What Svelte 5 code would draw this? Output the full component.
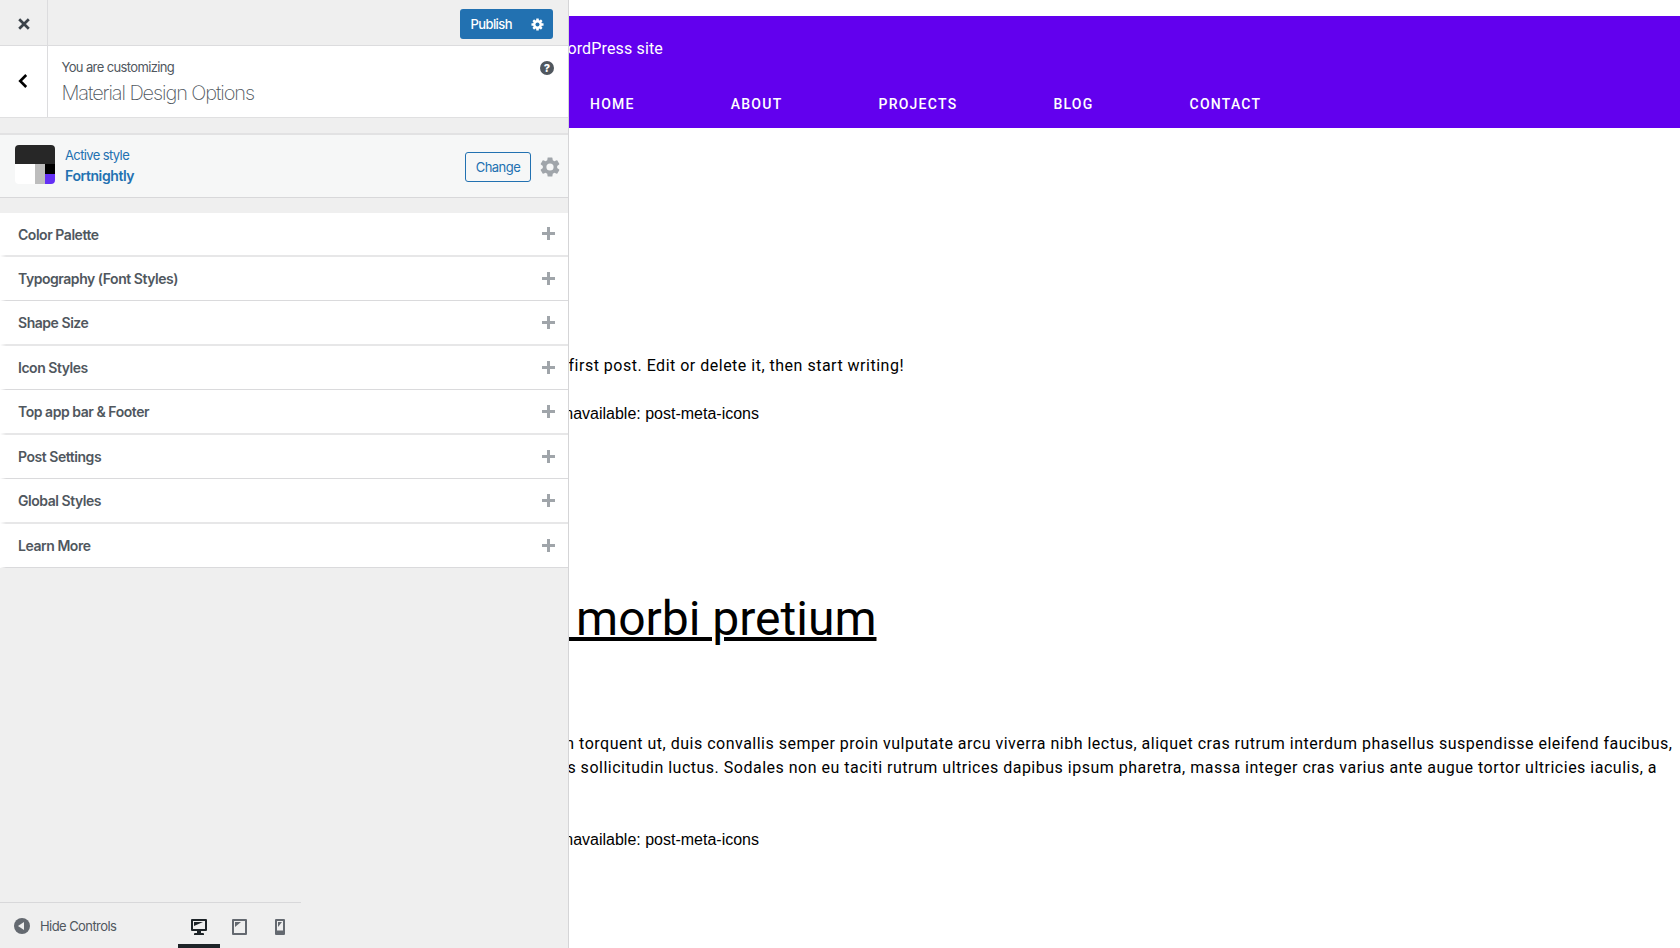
<script>
  const sections = [
    'Color Palette',
    'Typography (Font Styles)',
    'Shape Size',
    'Icon Styles',
    'Top app bar & Footer',
    'Post Settings',
    'Global Styles',
    'Learn More'
  ];
  const links = ['HOME', 'ABOUT', 'PROJECTS', 'BLOG', 'CONTACT'];
</script>

<div class="app">
  <aside>
    <div class="topbar">
      <div class="close">
        <svg width="12" height="12" viewBox="0 0 12 12"><path d="M1.2 1.2 10.8 10.8M10.8 1.2 1.2 10.8" stroke="#3c434a" stroke-width="2.7" /></svg>
      </div>
      <div class="publish">
        <span>Publish</span>
        <svg width="13" height="13" viewBox="-10 -10 20 20">
          <g fill="#fff">
            {#each [0, 45, 90, 135] as a}
              <rect x="-2" y="-9.3" width="4" height="18.6" rx=".5" transform="rotate({a})" />
            {/each}
            <circle r="6.8" />
          </g>
          <circle r="3.1" fill="#2271b1" />
        </svg>
      </div>
    </div>

    <header>
      <div class="back">
        <svg width="10" height="14" viewBox="0 0 10 14"><path d="M8.2 1 2.2 7l6 6" fill="none" stroke="#000" stroke-width="2.6" /></svg>
      </div>
      <div class="title">
        <p>You are customizing</p>
        <h1>Material Design Options</h1>
      </div>
      <div class="help">?</div>
    </header>

    <div class="gap"></div>

    <div class="style">
      <div class="swatch"><i class="dark"></i><i class="white"></i><i class="grey"></i><span><i class="black"></i><i class="violet"></i></span></div>
      <div class="name"><p>Active style</p><strong>Fortnightly</strong></div>
      <button>Change</button>
      <svg class="cog" width="24" height="24" viewBox="0 0 24 24"><path fill="#a0a5aa" d="M19.14 12.94c.04-.3.06-.61.06-.94 0-.32-.02-.64-.07-.94l2.03-1.58a.49.49 0 0 0 .12-.61l-1.92-3.32a.488.488 0 0 0-.59-.22l-2.39.96c-.5-.38-1.03-.7-1.62-.94l-.36-2.54a.484.484 0 0 0-.48-.41h-3.84c-.24 0-.43.17-.47.41l-.36 2.54c-.59.24-1.13.57-1.62.94l-2.39-.96c-.22-.08-.47 0-.59.22L2.74 8.87c-.12.21-.08.47.12.61l2.03 1.58c-.05.3-.09.63-.09.94s.02.64.07.94l-2.03 1.58a.49.49 0 0 0-.12.61l1.92 3.32c.12.22.37.29.59.22l2.39-.96c.5.38 1.03.7 1.62.94l.36 2.54c.05.24.24.41.48.41h3.84c.24 0 .44-.17.47-.41l.36-2.54c.59-.24 1.13-.56 1.62-.94l2.39.96c.22.08.47 0 .59-.22l1.92-3.32c.12-.22.07-.47-.12-.61l-2.01-1.58zM12 15.6A3.6 3.6 0 1 1 12 8.4a3.6 3.6 0 0 1 0 7.2z" /></svg>
    </div>

    <div class="gap second"></div>

    <ul>
      {#each sections as s}
        <li><span>{s}</span><svg width="13" height="13" viewBox="0 0 13 13"><path d="M6.5 0v13M0 6.5h13" stroke="#a0a5aa" stroke-width="3" /></svg></li>
      {/each}
    </ul>

    <footer>
      <svg width="16" height="16" viewBox="0 0 16 16"><circle cx="8" cy="8" r="8" fill="#646970" /><path d="M10 4v8L4 8z" fill="#eee" /></svg>
      <span class="hide">Hide Controls</span>
      <div class="device active">
        <svg width="16" height="16" viewBox="0 0 16 16"><path fill="#1d2327" fill-rule="evenodd" d="M1 0h14q1 0 1 1v10q0 1-1 1h-5v2h2q1 0 1 1v1H3v-1q0-1 1-1h2v-2H1q-1 0-1-1V1q0-1 1-1zM2 2v8h12V2z" /><path fill="#1d2327" d="M3 3h9L3 7z" /></svg>
      </div>
      <div class="device">
        <svg width="15" height="16" viewBox="0 0 15 16"><path fill="#646970" fill-rule="evenodd" d="M1 0h13q1 0 1 1v14q0 1-1 1H1q-1 0-1-1V1q0-1 1-1zM2 2v12h11V2z" /><path fill="#646970" d="M3 3h6L3 8z" /></svg>
      </div>
      <div class="device">
        <svg width="10" height="16" viewBox="0 0 10 16"><path fill="#646970" fill-rule="evenodd" d="M1 0h8q1 0 1 1v14q0 1-1 1H1q-1 0-1-1V1q0-1 1-1zM2 2v9.500h6V2z" /><path fill="#646970" d="M3 3h4L3 8z" /></svg>
      </div>
    </footer>
  </aside>

  <main>
    <div class="hero">
      <div class="line tagline"><span>ordPress site</span></div>
      <nav>{#each links as l}<a href="#top">{l}</a>{/each}</nav>
    </div>
    <div class="line first"><span>first post. Edit or delete it, then start writing!</span></div>
    <div class="line meta"><span>navailable: post-meta-icons</span></div>
    <h2 class="line"><span>&nbsp;morbi pretium</span></h2>
    <div class="line p1"><span>n torquent ut, duis convallis semper proin vulputate arcu viverra nibh lectus, aliquet cras rutrum interdum phasellus suspendisse eleifend faucibus,</span></div>
    <div class="line p2"><span>s sollicitudin luctus. Sodales non eu taciti rutrum ultrices dapibus ipsum pharetra, massa integer cras varius ante augue tortor ultricies iaculis, a</span></div>
    <div class="line meta last"><span>navailable: post-meta-icons</span></div>
  </main>
</div>

<style>
  :global(body) { overflow: hidden; }
  * { box-sizing: border-box; margin: 0; padding: 0; }
  svg { display: block; flex: none; }
  .app { display: flex; width: 1680px; height: 948px; background: #fff; font-family: Inter, sans-serif; }

  aside { width: 569px; height: 948px; flex: none; display: flex; flex-direction: column; background: #efefef; border-right: 1px solid #d5d5d7; color: #50575e; font-size: 13px; }
  .topbar { height: 46px; flex: none; display: flex; justify-content: space-between; border-bottom: 1px solid #dcdcde; }
  .close { width: 48px; border-right: 1px solid #dcdcde; padding: 18px 0 0 18px; }
  .publish { width: 93px; height: 30px; margin: 9px 15px 0 0; display: flex; align-items: center; justify-content: space-between; padding: 0 9px 0 10.5px; background: #2271b1; border-radius: 3px; color: #fff; font-weight: 500; letter-spacing: -0.6px; }

  header { height: 71px; flex: none; display: flex; background: #fff; }
  .back { width: 48px; border-right: 1px solid #dcdcde; padding: 28px 0 0 18px; }
  .title { flex: 1; padding: 12px 0 0 13.5px; white-space: nowrap; }
  .title p { line-height: 19px; letter-spacing: -0.63px; }
  h1 { font-size: 20px; line-height: 28px; font-weight: 200; letter-spacing: -1.1px; margin-top: 2px; }
  .help { width: 14px; height: 14px; margin: 15px 14px 0 0; border-radius: 50%; background: #50575e; color: #fff; font: 800 11px/14px Inter, sans-serif; text-align: center; }

  .gap { height: 18px; flex: none; border-top: 1px solid #e0e0e1; border-bottom: 2px solid #e2e2e3; }
  .gap.second { height: 16px; border-top: 1px solid #d8d8da; border-bottom: 0; }

  .style { height: 62px; flex: none; display: flex; align-items: center; background: #f6f7f7; padding: 0 6px 0 15px; color: #2271b1; }
  .swatch { width: 40px; height: 39px; margin-top: -3px; display: grid; grid-template-columns: 20px 10px 10px; grid-template-rows: 19px 20px; border-radius: 4px; overflow: hidden; }
  .swatch span { display: grid; grid-template-rows: 1fr 1fr; }
  .dark { grid-column: 1 / 4; background: #272727; }
  .white { background: #fff; }
  .grey { background: #bdbdbd; }
  .black { background: #000; }
  .violet { background: #6430f5; }
  .name { flex: 1; margin: -2px 0 0 10px; white-space: nowrap; }
  .name p { line-height: 20px; letter-spacing: -0.62px; }
  .name strong { display: block; line-height: 21px; font-size: 14px; font-weight: 600; letter-spacing: -0.4px; }
  button { width: 66px; height: 30px; border: 1px solid #2271b1; border-radius: 3px; background: #f6f7f7; color: #2271b1; font: 400 13px/28px Inter, sans-serif; letter-spacing: -0.5px; margin: 2px 7px 0 0; }
  .cog { margin-top: 2px; }

  ul { list-style: none; flex: none; }
  li { height: 44px; display: flex; align-items: center; justify-content: space-between; padding: 0 13px 0 18px; background: #fff; border-bottom: 1px solid; border-image: linear-gradient(90deg, #fff 1px, #dadadc 7px) 1; font-size: 14px; font-weight: 600; letter-spacing: -0.46px; }
  li:nth-child(odd) { height: 45px; border-bottom-width: 2px; border-image: linear-gradient(90deg, #fff 1px, #e7e7e8 7px) 1; }
  li:first-child { height: 44px; }
  li svg { margin-top: -1px; }

  footer { width: 301px; height: 46px; margin-top: auto; display: flex; border-top: 1px solid #d8d8da; padding-left: 14px; }
  footer > svg { margin-top: 15px; }
  .hide { width: 136px; flex: none; margin-left: 10px; line-height: 47px; letter-spacing: -0.57px; white-space: nowrap; }
  .device { width: 42px; flex: none; display: flex; justify-content: center; padding-top: 16px; border-bottom: 4px solid transparent; }
  .device + .device { width: 40px; }
  .active { border-color: #1d2327; margin-left: 1.5px; }

  main { width: 1111px; flex: none; font: 400 16px/24px Roboto, sans-serif; color: #000; overflow: hidden; }
  .hero { height: 112px; margin-top: 16px; background: #6200ee; color: #fff; overflow: hidden; }
  .line { display: flex; justify-content: flex-end; overflow: hidden; white-space: nowrap; letter-spacing: 0.5px; }
  .line span { flex: none; }
  .tagline { width: 94px; margin-top: 21px; letter-spacing: 0.15px; }
  nav { display: flex; gap: 96px; padding-left: 21px; margin-top: 31px; }
  nav a { color: #fff; text-decoration: none; font-weight: 500; font-size: 14px; letter-spacing: 1.25px; }
  .first { width: 335px; margin-top: 226px; }
  .meta { width: 190px; margin-top: 24px; font-family: "Liberation Sans", Arial, sans-serif; letter-spacing: 0; }
  h2.line { width: 307.5px; margin-top: 157px; height: 72px; font-size: 48px; line-height: 72px; font-weight: 400; letter-spacing: 0; }
  h2 span { text-decoration: underline; text-decoration-thickness: 4px; text-underline-offset: 2px; }
  .p1 { width: 1103.5px; margin-top: 77px; }
  .p2 { width: 1088px; }
  .last { margin-top: 48px; }
</style>
